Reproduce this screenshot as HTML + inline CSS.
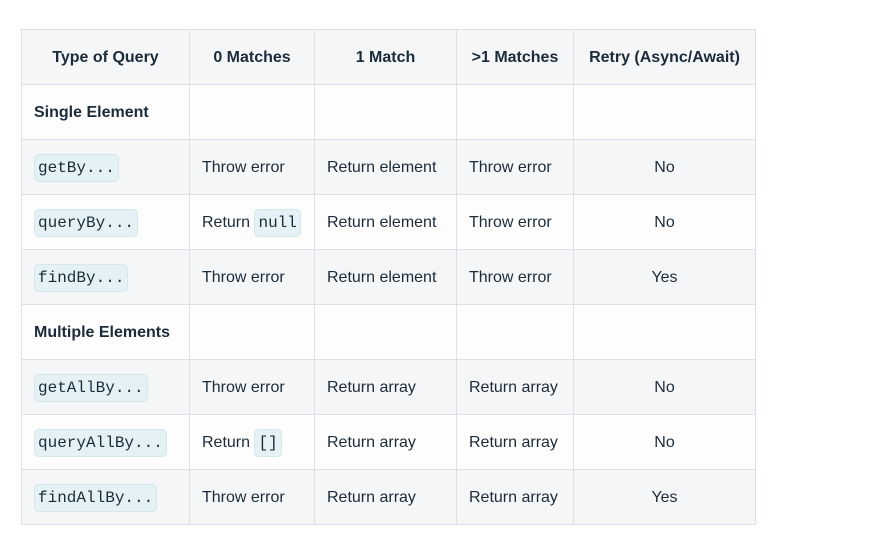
<!DOCTYPE html>
<html><head><style>
body{margin:0;background:#fff;width:869px;height:557px;overflow:hidden;font-family:"Liberation Sans",sans-serif;color:#1c2b3a;}
table{position:absolute;left:21px;top:29px;border-collapse:collapse;font-size:16px;}
tr{height:55px;}
td,th{border:1px solid #dbe1e6;height:55px;padding:2px 12px 0;box-sizing:border-box;}
th{font-weight:bold;text-align:center;}
tr.s{background:#f5f6f7;}
tr.w{background:#fdfdfd;}
td.c{text-align:center;}
code{font-family:"Liberation Mono",monospace;font-size:16px;background:#e4f2f5;border:1px solid #d4e7ec;border-radius:5px;padding:4px 3px;color:#1c2b3a;}
</style></head><body>
<table>
<colgroup><col style="width:168px"><col style="width:125px"><col style="width:142px"><col style="width:117px"><col style="width:182px"></colgroup>
<tr class="s"><th>Type of Query</th><th>0 Matches</th><th>1 Match</th><th>&gt;1 Matches</th><th>Retry (Async/Await)</th></tr>
<tr class="w"><td><b>Single Element</b></td><td></td><td></td><td></td><td></td></tr>
<tr class="s"><td><code>getBy...</code></td><td>Throw error</td><td>Return element</td><td>Throw error</td><td class="c">No</td></tr>
<tr class="w"><td><code>queryBy...</code></td><td>Return <code>null</code></td><td>Return element</td><td>Throw error</td><td class="c">No</td></tr>
<tr class="s"><td><code>findBy...</code></td><td>Throw error</td><td>Return element</td><td>Throw error</td><td class="c">Yes</td></tr>
<tr class="w"><td><b>Multiple Elements</b></td><td></td><td></td><td></td><td></td></tr>
<tr class="s"><td><code>getAllBy...</code></td><td>Throw error</td><td>Return array</td><td>Return array</td><td class="c">No</td></tr>
<tr class="w"><td><code>queryAllBy...</code></td><td>Return <code>[]</code></td><td>Return array</td><td>Return array</td><td class="c">No</td></tr>
<tr class="s"><td><code>findAllBy...</code></td><td>Throw error</td><td>Return array</td><td>Return array</td><td class="c">Yes</td></tr>
</table>
</body></html>
